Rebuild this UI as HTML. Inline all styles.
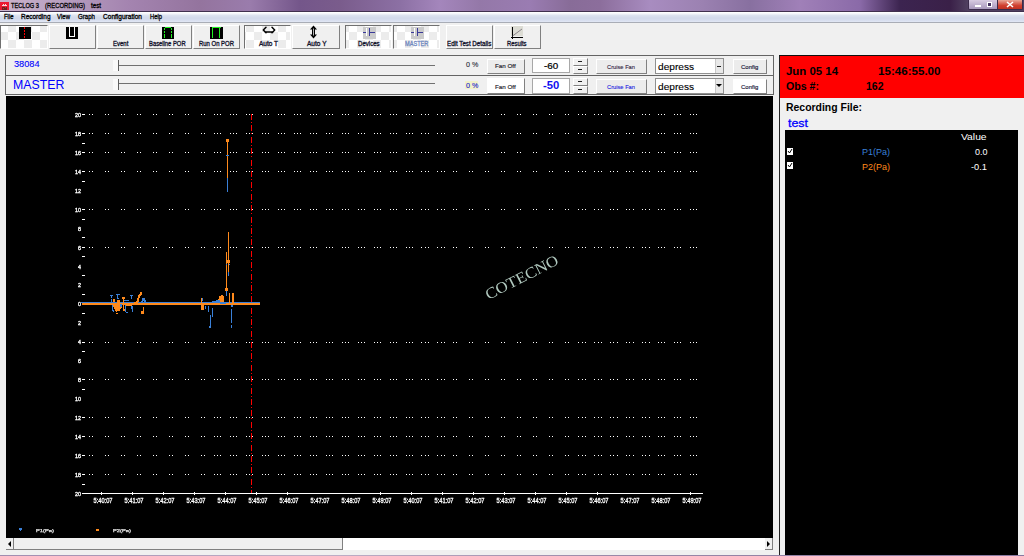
<!DOCTYPE html>
<html><head><meta charset="utf-8"><style>
*{margin:0;padding:0;box-sizing:border-box}
html,body{width:1024px;height:556px;overflow:hidden;background:#f0f0f0;font-family:"Liberation Sans", sans-serif;position:relative}
.a{position:absolute}
.t{position:absolute;white-space:nowrap;line-height:1}
</style></head><body>
<div class="a" style="left:0;top:0;width:1024px;height:12px;background:linear-gradient(90deg,#ccb4cc 0px,#b8a0c0 60px,#a484b0 128px,#94749e 200px,#9a7cac 250px,#74568a 300px,#7a5c8c 340px,#8c70a4 400px,#a486bc 440px,#9478a8 480px,#9a7cb2 530px,#886c98 570px,#8c6e9c 600px,#a88cc0 650px,#9c82b2 700px,#8870a0 750px,#a080b8 800px,#8a6aa8 860px,#3c2450 900px,#3a2048 950px,#504060 968px)"></div>
<div class="a" style="left:0;top:11px;width:1024px;height:1px;background:#40304e"></div>
<div class="a" style="left:0;top:2px;width:9px;height:8px;background:#ec1a32"></div>
<svg class="a" style="left:0;top:2px" width="9" height="8" shape-rendering="crispEdges"><path d="M3 2h1v1h-1zM5 2h1v1h-1zM2 3h5v1h-5z" fill="#f8d8d8"/><path d="M2 5h5v3h-5z" fill="#702020"/><path d="M3 6h1v1h-1zM5 5h1v1h-1z" fill="#b03030"/></svg>
<svg class="a" style="left:10px;top:0.2999999999999998px;overflow:visible" width="30" height="10.5"><text x="1" y="7.5" font-size="7.5" font-family="Liberation Sans" font-weight="normal" fill="#000" stroke="#000" stroke-width="0.3" textLength="28" lengthAdjust="spacingAndGlyphs">TECLOG 3</text></svg>
<svg class="a" style="left:44px;top:0.2999999999999998px;overflow:visible" width="42" height="10.5"><text x="1" y="7.5" font-size="7.5" font-family="Liberation Sans" font-weight="normal" fill="#000" stroke="#000" stroke-width="0.3" textLength="40" lengthAdjust="spacingAndGlyphs">(RECORDING)</text></svg>
<svg class="a" style="left:90px;top:0.2999999999999998px;overflow:visible" width="12" height="10.5"><text x="1" y="7.5" font-size="7.5" font-family="Liberation Sans" font-weight="normal" fill="#000" stroke="#000" stroke-width="0.3" textLength="10" lengthAdjust="spacingAndGlyphs">test</text></svg>
<div class="a" style="left:968px;top:0;width:30px;height:10px;background:linear-gradient(#d8cce2,#a898bc);border:1px solid #3a2a4a;border-top:none;border-radius:0 0 0 2px"></div>
<div class="a" style="left:975px;top:5px;width:6px;height:2px;background:#fff"></div>
<div class="a" style="left:987px;top:2px;width:5px;height:5px;border:1px solid #fff;background:#443060"></div>
<div class="a" style="left:997px;top:0;width:26px;height:10px;background:linear-gradient(#e8a898,#d04030 60%,#c03020);border:1px solid #3a2a4a;border-top:none;border-radius:0 0 2px 0"></div>
<svg class="a" style="left:1006px;top:1px" width="8" height="7"><path d="M1 1L7 6M7 1L1 6" stroke="#fff" stroke-width="1.6"/></svg>
<div class="a" style="left:0;top:12px;width:1024px;height:10px;background:linear-gradient(#fff 0px,#fbfcfe 1px,#dce2ef 3.5px,#d2d9ea 6px,#d6ddee 8px,#e2e8f5 10px)"></div>
<div class="a" style="left:0;top:22px;width:1024px;height:1px;background:#a9adb6"></div>
<svg class="a" style="left:2.5px;top:11.9px;overflow:visible" width="11.5" height="9.9"><text x="1" y="7.1" font-size="7.1" font-family="Liberation Sans" font-weight="normal" fill="#000" stroke="#000" stroke-width="0.3" textLength="9.5" lengthAdjust="spacingAndGlyphs">File</text></svg>
<svg class="a" style="left:19.5px;top:11.9px;overflow:visible" width="31.5" height="9.9"><text x="1" y="7.1" font-size="7.1" font-family="Liberation Sans" font-weight="normal" fill="#000" stroke="#000" stroke-width="0.3" textLength="29.5" lengthAdjust="spacingAndGlyphs">Recording</text></svg>
<svg class="a" style="left:56px;top:11.9px;overflow:visible" width="15" height="9.9"><text x="1" y="7.1" font-size="7.1" font-family="Liberation Sans" font-weight="normal" fill="#000" stroke="#000" stroke-width="0.3" textLength="13" lengthAdjust="spacingAndGlyphs">View</text></svg>
<svg class="a" style="left:77px;top:11.9px;overflow:visible" width="19" height="9.9"><text x="1" y="7.1" font-size="7.1" font-family="Liberation Sans" font-weight="normal" fill="#000" stroke="#000" stroke-width="0.3" textLength="17" lengthAdjust="spacingAndGlyphs">Graph</text></svg>
<svg class="a" style="left:102px;top:11.9px;overflow:visible" width="41" height="9.9"><text x="1" y="7.1" font-size="7.1" font-family="Liberation Sans" font-weight="normal" fill="#000" stroke="#000" stroke-width="0.3" textLength="39" lengthAdjust="spacingAndGlyphs">Configuration</text></svg>
<svg class="a" style="left:149px;top:11.9px;overflow:visible" width="14" height="9.9"><text x="1" y="7.1" font-size="7.1" font-family="Liberation Sans" font-weight="normal" fill="#000" stroke="#000" stroke-width="0.3" textLength="12" lengthAdjust="spacingAndGlyphs">Help</text></svg>
<div class="a" style="left:0px;top:25px;width:48px;height:24px;background-color:#fff;background-image:linear-gradient(45deg,#ececec 25%,transparent 25%,transparent 75%,#ececec 75%),linear-gradient(45deg,#ececec 25%,transparent 25%,transparent 75%,#ececec 75%);background-size:16px 16px;background-position:0px -1px,8px 7px"></div><div class="a" style="left:0px;top:25px;width:48px;height:24px;border-left:1px solid #707070;border-top:1px solid #707070;border-right:1px solid #fff;border-bottom:1px solid #fff"></div>
<div class="a" style="left:49px;top:25px;width:47px;height:24px;background:#f0f0f0;border-left:1px solid #fff;border-top:1px solid #fff;border-right:1px solid #808080;border-bottom:1px solid #808080"></div>
<div class="a" style="left:97px;top:25px;width:47px;height:24px;background:#f0f0f0;border-left:1px solid #fff;border-top:1px solid #fff;border-right:1px solid #808080;border-bottom:1px solid #808080"></div>
<div class="a" style="left:145px;top:25px;width:47px;height:24px;background:#f0f0f0;border-left:1px solid #fff;border-top:1px solid #fff;border-right:1px solid #808080;border-bottom:1px solid #808080"></div>
<div class="a" style="left:193px;top:25px;width:47px;height:24px;background:#f0f0f0;border-left:1px solid #fff;border-top:1px solid #fff;border-right:1px solid #808080;border-bottom:1px solid #808080"></div>
<div class="a" style="left:244px;top:25px;width:47px;height:24px;background-color:#fff;background-image:linear-gradient(45deg,#ececec 25%,transparent 25%,transparent 75%,#ececec 75%),linear-gradient(45deg,#ececec 25%,transparent 25%,transparent 75%,#ececec 75%);background-size:16px 16px;background-position:10px -1px,18px 7px"></div><div class="a" style="left:244px;top:25px;width:47px;height:24px;border-left:1px solid #707070;border-top:1px solid #707070;border-right:1px solid #fff;border-bottom:1px solid #fff"></div>
<div class="a" style="left:292px;top:25px;width:48px;height:24px;background:#f0f0f0;border-left:1px solid #fff;border-top:1px solid #fff;border-right:1px solid #808080;border-bottom:1px solid #808080"></div>
<div class="a" style="left:345px;top:25px;width:47px;height:24px;background-color:#fff;background-image:linear-gradient(45deg,#ececec 25%,transparent 25%,transparent 75%,#ececec 75%),linear-gradient(45deg,#ececec 25%,transparent 25%,transparent 75%,#ececec 75%);background-size:16px 16px;background-position:4px -1px,12px 7px"></div><div class="a" style="left:345px;top:25px;width:47px;height:24px;border-left:1px solid #707070;border-top:1px solid #707070;border-right:1px solid #fff;border-bottom:1px solid #fff"></div>
<div class="a" style="left:393px;top:25px;width:47px;height:24px;background-color:#fff;background-image:linear-gradient(45deg,#ececec 25%,transparent 25%,transparent 75%,#ececec 75%),linear-gradient(45deg,#ececec 25%,transparent 25%,transparent 75%,#ececec 75%);background-size:16px 16px;background-position:4px -1px,12px 7px"></div><div class="a" style="left:393px;top:25px;width:47px;height:24px;border-left:1px solid #707070;border-top:1px solid #707070;border-right:1px solid #fff;border-bottom:1px solid #fff"></div>
<div class="a" style="left:446px;top:25px;width:47px;height:24px;background:#f0f0f0;border-left:1px solid #fff;border-top:1px solid #fff;border-right:1px solid #808080;border-bottom:1px solid #808080"></div>
<div class="a" style="left:494px;top:25px;width:47px;height:24px;background:#f0f0f0;border-left:1px solid #fff;border-top:1px solid #fff;border-right:1px solid #808080;border-bottom:1px solid #808080"></div>
<svg class="a" style="left:111.7px;top:39.4px;overflow:visible" width="17.3" height="9.2"><text x="1" y="6.6" font-size="6.6" font-family="Liberation Sans" font-weight="normal" fill="#10102a" stroke="#10102a" stroke-width="0.3" textLength="15.3" lengthAdjust="spacingAndGlyphs">Event</text></svg>
<svg class="a" style="left:148.4px;top:39.4px;overflow:visible" width="38.6" height="9.2"><text x="1" y="6.6" font-size="6.6" font-family="Liberation Sans" font-weight="normal" fill="#10102a" stroke="#10102a" stroke-width="0.3" textLength="36.6" lengthAdjust="spacingAndGlyphs">Baseline POR</text></svg>
<svg class="a" style="left:197.6px;top:39.4px;overflow:visible" width="37" height="9.2"><text x="1" y="6.6" font-size="6.6" font-family="Liberation Sans" font-weight="normal" fill="#10102a" stroke="#10102a" stroke-width="0.3" textLength="35" lengthAdjust="spacingAndGlyphs">Run On POR</text></svg>
<svg class="a" style="left:258.2px;top:39.4px;overflow:visible" width="21" height="9.2"><text x="1" y="6.6" font-size="6.6" font-family="Liberation Sans" font-weight="normal" fill="#10102a" stroke="#10102a" stroke-width="0.3" textLength="19" lengthAdjust="spacingAndGlyphs">Auto T</text></svg>
<svg class="a" style="left:305.9px;top:39.4px;overflow:visible" width="21.5" height="9.2"><text x="1" y="6.6" font-size="6.6" font-family="Liberation Sans" font-weight="normal" fill="#10102a" stroke="#10102a" stroke-width="0.3" textLength="19.5" lengthAdjust="spacingAndGlyphs">Auto Y</text></svg>
<svg class="a" style="left:357.4px;top:39.4px;overflow:visible" width="23.6" height="9.2"><text x="1" y="6.6" font-size="6.6" font-family="Liberation Sans" font-weight="normal" fill="#10102a" stroke="#10102a" stroke-width="0.3" textLength="21.6" lengthAdjust="spacingAndGlyphs">Devices</text></svg>
<svg class="a" style="left:404.3px;top:39.4px;overflow:visible" width="25.4" height="9.2"><text x="1" y="6.6" font-size="6.6" font-family="Liberation Sans" font-weight="normal" fill="#7088c0" stroke="#7088c0" stroke-width="0.3" textLength="23.4" lengthAdjust="spacingAndGlyphs">MASTER</text></svg>
<svg class="a" style="left:445.7px;top:39.4px;overflow:visible" width="46.3" height="9.2"><text x="1" y="6.6" font-size="6.6" font-family="Liberation Sans" font-weight="normal" fill="#10102a" stroke="#10102a" stroke-width="0.3" textLength="44.3" lengthAdjust="spacingAndGlyphs">Edit Test Details</text></svg>
<svg class="a" style="left:505.9px;top:39.4px;overflow:visible" width="21.5" height="9.2"><text x="1" y="6.6" font-size="6.6" font-family="Liberation Sans" font-weight="normal" fill="#10102a" stroke="#10102a" stroke-width="0.3" textLength="19.5" lengthAdjust="spacingAndGlyphs">Results</text></svg>
<div class="a" style="left:19px;top:27px;width:12px;height:12px;background:#000"></div>
<div class="a" style="left:24px;top:27px;width:1px;height:12px;background:repeating-linear-gradient(#f00 0 2px,#000 2px 3px)"></div>
<div class="a" style="left:66px;top:27px;width:12px;height:12px;background:#000"></div>
<div class="a" style="left:69px;top:27px;width:6px;height:10px;border:1px solid #fff;border-top:none"></div>
<div class="a" style="left:162px;top:27px;width:12px;height:12px;background:#000"></div>
<div class="a" style="left:210px;top:27px;width:13px;height:12px;background:#000"></div>
<svg class="a" style="left:162px;top:27px" width="12" height="12" shape-rendering="crispEdges"><path d="M2 1h1v2h-1zM3 0h6v1h-6zM9 1h1v2h-1zM2 4h1v2h-1zM9 4h1v2h-1zM2 7h1v4h-1zM9 7h1v4h-1z" fill="#20f020"/></svg>
<svg class="a" style="left:210px;top:27px" width="13" height="12" shape-rendering="crispEdges"><path d="M2 0h9v1h-9zM2 1h1v10h-1zM9 1h1v10h-1z" fill="#20f020"/></svg>
<svg class="a" style="left:262px;top:26px" width="15" height="9"><path d="M4 1.2 L1.3 4 L4 6.8 M10 1.2 L12.7 4 L10 6.8 M3 6 H11" stroke="#000" stroke-width="1.5" fill="none" stroke-linejoin="round" stroke-linecap="round"/></svg>
<svg class="a" style="left:309px;top:25px" width="10" height="15"><path d="M4.5 0.5 L8 4.5 H1 Z M4.5 13.5 L8 9.5 H1 Z" fill="#000"/><path d="M3 4 H6 V10 H3 Z" fill="#000"/><path d="M4.5 3.5 V10.5" stroke="#fff" stroke-width="0.7"/></svg>
<div class="a" style="left:363px;top:27px;width:13px;height:12px;background:#cbcbcb"></div>
<svg class="a" style="left:363px;top:27px" width="13" height="12" shape-rendering="crispEdges"><path d="M3 1h1v8h-1z" fill="#fff"/><path d="M0 5h3v1h-3zM6 1h1v8h-1zM7 5h5v1h-5z" fill="#3a3a98"/></svg>
<div class="a" style="left:411px;top:27px;width:13px;height:12px;background:#cbcbcb"></div>
<svg class="a" style="left:411px;top:27px" width="13" height="12" shape-rendering="crispEdges"><path d="M3 1h1v8h-1z" fill="#fff"/><path d="M0 5h3v1h-3zM6 1h1v8h-1zM7 5h5v1h-5z" fill="#3a3a98"/></svg>
<div class="a" style="left:511px;top:26px;width:12px;height:10px;background:#dcdcd4"></div>
<svg class="a" style="left:510px;top:26px" width="14" height="14" shape-rendering="crispEdges"><path d="M2 1h1v12h-1zM1 11h12v1h-12z" fill="#000"/><path d="M2.5 10L12 3" stroke="#807880" stroke-width="0.9" shape-rendering="auto"/></svg>
<div class="a" style="left:5px;top:55px;width:769px;height:40px;border:1px solid #646464;background:#f0f0f0"></div>
<div class="a" style="left:5px;top:75px;width:769px;height:1px;background:#646464"></div>
<svg class="a" style="left:12.8px;top:57.6px;overflow:visible" width="27.6" height="13.2"><text x="1" y="9.4" font-size="9.4" font-family="Liberation Sans" font-weight="normal" fill="#0000ff" stroke="#0000ff" stroke-width="0.1" textLength="25.6" lengthAdjust="spacingAndGlyphs">38084</text></svg>
<svg class="a" style="left:12.4px;top:76.5px;overflow:visible" width="53.3" height="17.4"><text x="1" y="12.4" font-size="12.4" font-family="Liberation Sans" font-weight="normal" fill="#0000ff" textLength="51.3" lengthAdjust="spacingAndGlyphs">MASTER</text></svg>
<div class="a" style="left:119px;top:65px;width:316px;height:1px;background:#707070"></div>
<div class="a" style="left:113px;top:60px;width:6px;height:11px;background:#fafafa;border-right:1px solid #606060"></div>
<div class="a" style="left:119px;top:83px;width:316px;height:1px;background:#707070"></div>
<div class="a" style="left:113px;top:79px;width:6px;height:11px;background:#fafafa;border-right:1px solid #606060"></div>
<svg class="a" style="left:464.5px;top:60.2px;overflow:visible" width="14.3" height="9.5"><text x="1" y="6.8" font-size="6.8" font-family="Liberation Sans" font-weight="normal" fill="#282838" stroke="#282838" stroke-width="0.1" textLength="12.3" lengthAdjust="spacingAndGlyphs">0 %</text></svg>
<div class="a" style="left:465px;top:81px;width:13px;height:8px;background:#f2f2c8"></div>
<svg class="a" style="left:464.5px;top:80.7px;overflow:visible" width="14.3" height="9.5"><text x="1" y="6.8" font-size="6.8" font-family="Liberation Sans" font-weight="normal" fill="#2020d0" stroke="#2020d0" stroke-width="0.1" textLength="12.3" lengthAdjust="spacingAndGlyphs">0 %</text></svg>
<div class="a" style="left:487px;top:59px;width:38px;height:15px;background:#ececec;border-left:1px solid #fff;border-top:1px solid #fff;border-right:1px solid #808080;border-bottom:1px solid #808080"></div>
<div class="a" style="left:487px;top:78px;width:38px;height:16px;background:#fff;border-left:1px solid #fff;border-top:1px solid #fff;border-right:1px solid #808080;border-bottom:1px solid #808080"></div>
<svg class="a" style="left:493.5px;top:62px;overflow:visible" width="22.7" height="8.4"><text x="1" y="6" font-size="6" font-family="Liberation Sans" font-weight="normal" fill="#181828" stroke="#181828" stroke-width="0.15" textLength="20.7" lengthAdjust="spacingAndGlyphs">Fan Off</text></svg>
<svg class="a" style="left:493.5px;top:83px;overflow:visible" width="22.7" height="8.4"><text x="1" y="6" font-size="6" font-family="Liberation Sans" font-weight="normal" fill="#181828" stroke="#181828" stroke-width="0.15" textLength="20.7" lengthAdjust="spacingAndGlyphs">Fan Off</text></svg>
<div class="a" style="left:532px;top:58px;width:38px;height:15px;background:#fff;border:1px solid #a8a8a8"></div>
<svg class="a" style="left:543px;top:59.699999999999996px;overflow:visible" width="16.2" height="12.0"><text x="1" y="8.6" font-size="8.6" font-family="Liberation Sans" font-weight="normal" fill="#000" stroke="#000" stroke-width="0.2" textLength="14.2" lengthAdjust="spacingAndGlyphs">-60</text></svg>
<div class="a" style="left:532px;top:78px;width:38px;height:16px;background:#fff;border:1px solid #a8a8a8"></div>
<svg class="a" style="left:541.7px;top:79.3px;overflow:visible" width="18.3" height="14.6"><text x="1" y="10.4" font-size="10.4" font-family="Liberation Sans" font-weight="bold" fill="#1010f0" textLength="16.3" lengthAdjust="spacingAndGlyphs">-50</text></svg>
<div class="a" style="left:573px;top:58px;width:15px;height:8px;background:#f0f0f0;border-left:1px solid #fff;border-top:1px solid #fff;border-right:1px solid #808080;border-bottom:1px solid #808080"></div>
<div class="a" style="left:573px;top:66px;width:15px;height:8px;background:#f0f0f0;border-left:1px solid #fff;border-top:1px solid #fff;border-right:1px solid #808080;border-bottom:1px solid #808080"></div>
<div class="a" style="left:578px;top:61px;width:4px;height:1px;background:#202020"></div>
<div class="a" style="left:578px;top:69px;width:4px;height:1px;background:#202020"></div>
<div class="a" style="left:573px;top:78px;width:15px;height:8px;background:#f0f0f0;border-left:1px solid #fff;border-top:1px solid #fff;border-right:1px solid #808080;border-bottom:1px solid #808080"></div>
<div class="a" style="left:573px;top:86px;width:15px;height:8px;background:#f0f0f0;border-left:1px solid #fff;border-top:1px solid #fff;border-right:1px solid #808080;border-bottom:1px solid #808080"></div>
<div class="a" style="left:578px;top:81px;width:4px;height:1px;background:#202020"></div>
<div class="a" style="left:578px;top:89px;width:4px;height:1px;background:#202020"></div>
<div class="a" style="left:596px;top:59px;width:51px;height:15px;background:#ececec;border-left:1px solid #fff;border-top:1px solid #fff;border-right:1px solid #808080;border-bottom:1px solid #808080"></div>
<div class="a" style="left:596px;top:79px;width:51px;height:15px;background:#ececec;border-left:1px solid #fff;border-top:1px solid #fff;border-right:1px solid #808080;border-bottom:1px solid #808080"></div>
<svg class="a" style="left:606px;top:63.2px;overflow:visible" width="30" height="8.1"><text x="1" y="5.8" font-size="5.8" font-family="Liberation Sans" font-weight="normal" fill="#302040" stroke="#302040" stroke-width="0.1" textLength="28" lengthAdjust="spacingAndGlyphs">Cruise Fan</text></svg>
<svg class="a" style="left:606px;top:83.2px;overflow:visible" width="30" height="8.1"><text x="1" y="5.8" font-size="5.8" font-family="Liberation Sans" font-weight="normal" fill="#2020e0" stroke="#2020e0" stroke-width="0.1" textLength="28" lengthAdjust="spacingAndGlyphs">Cruise Fan</text></svg>
<div class="a" style="left:655px;top:58px;width:69px;height:16px;background:#fff;border:1px solid #909090"></div>
<div class="a" style="left:715px;top:59px;width:8px;height:14px;background:#e8e8e8;border-left:1px solid #c8c8c8"></div>
<svg class="a" style="left:656.5px;top:60.2px;overflow:visible" width="38" height="13.7"><text x="1" y="9.8" font-size="9.8" font-family="Liberation Sans" font-weight="normal" fill="#000" stroke="#000" stroke-width="0.12" textLength="36" lengthAdjust="spacingAndGlyphs">depress</text></svg>
<div class="a" style="left:655px;top:78px;width:69px;height:16px;background:#fff;border:1px solid #909090"></div>
<div class="a" style="left:715px;top:79px;width:8px;height:14px;background:#e8e8e8;border-left:1px solid #c8c8c8"></div>
<svg class="a" style="left:656.5px;top:80.2px;overflow:visible" width="38" height="13.7"><text x="1" y="9.8" font-size="9.8" font-family="Liberation Sans" font-weight="normal" fill="#000" stroke="#000" stroke-width="0.12" textLength="36" lengthAdjust="spacingAndGlyphs">depress</text></svg>
<div class="a" style="left:717px;top:66px;width:4px;height:1px;background:#202020"></div>
<svg class="a" style="left:716px;top:84px" width="6" height="4"><path d="M0 0 H6 L3 3 Z" fill="#000"/></svg>
<div class="a" style="left:733px;top:59px;width:34px;height:15px;background:#ececec;border-left:1px solid #fff;border-top:1px solid #fff;border-right:1px solid #808080;border-bottom:1px solid #808080"></div>
<div class="a" style="left:733px;top:79px;width:34px;height:15px;background:#fff;border-left:1px solid #fff;border-top:1px solid #fff;border-right:1px solid #808080;border-bottom:1px solid #808080"></div>
<svg class="a" style="left:740.2px;top:62.8px;overflow:visible" width="19.3" height="8.7"><text x="1" y="6.2" font-size="6.2" font-family="Liberation Sans" font-weight="normal" fill="#181838" stroke="#181838" stroke-width="0.15" textLength="17.3" lengthAdjust="spacingAndGlyphs">Config</text></svg>
<svg class="a" style="left:740.2px;top:82.8px;overflow:visible" width="19.3" height="8.7"><text x="1" y="6.2" font-size="6.2" font-family="Liberation Sans" font-weight="normal" fill="#181838" stroke="#181838" stroke-width="0.15" textLength="17.3" lengthAdjust="spacingAndGlyphs">Config</text></svg>
<svg width="767" height="442" viewBox="6 96 767 442" style="position:absolute;left:6px;top:96px;will-change:transform" shape-rendering="crispEdges">
<rect x="6" y="96" width="767" height="442" fill="#000"/>
<path d="M89 114h1v1h-1zM92 114h1v1h-1zM105 114h1v1h-1zM108 114h1v1h-1zM121 114h1v1h-1zM124 114h1v1h-1zM137 114h1v1h-1zM140 114h1v1h-1zM153 114h1v1h-1zM156 114h1v1h-1zM169 114h1v1h-1zM172 114h1v1h-1zM185 114h1v1h-1zM188 114h1v1h-1zM201 114h1v1h-1zM204 114h1v1h-1zM214 114h1v1h-1zM217 114h1v1h-1zM220 114h1v1h-1zM230 114h1v1h-1zM233 114h1v1h-1zM236 114h1v1h-1zM246 114h1v1h-1zM249 114h1v1h-1zM252 114h1v1h-1zM262 114h1v1h-1zM265 114h1v1h-1zM268 114h1v1h-1zM278 114h1v1h-1zM281 114h1v1h-1zM284 114h1v1h-1zM294 114h1v1h-1zM297 114h1v1h-1zM300 114h1v1h-1zM310 114h1v1h-1zM313 114h1v1h-1zM316 114h1v1h-1zM326 114h1v1h-1zM329 114h1v1h-1zM332 114h1v1h-1zM342 114h1v1h-1zM345 114h1v1h-1zM348 114h1v1h-1zM358 114h1v1h-1zM361 114h1v1h-1zM364 114h1v1h-1zM374 114h1v1h-1zM377 114h1v1h-1zM380 114h1v1h-1zM390 114h1v1h-1zM393 114h1v1h-1zM396 114h1v1h-1zM406 114h1v1h-1zM409 114h1v1h-1zM412 114h1v1h-1zM421 114h1v1h-1zM425 114h1v1h-1zM428 114h1v1h-1zM437 114h1v1h-1zM441 114h1v1h-1zM444 114h1v1h-1zM453 114h1v1h-1zM456 114h1v1h-1zM469 114h1v1h-1zM472 114h1v1h-1zM485 114h1v1h-1zM488 114h1v1h-1zM501 114h1v1h-1zM504 114h1v1h-1zM517 114h1v1h-1zM520 114h1v1h-1zM533 114h1v1h-1zM536 114h1v1h-1zM549 114h1v1h-1zM552 114h1v1h-1zM565 114h1v1h-1zM568 114h1v1h-1zM578 114h1v1h-1zM582 114h1v1h-1zM585 114h1v1h-1zM594 114h1v1h-1zM598 114h1v1h-1zM601 114h1v1h-1zM610 114h1v1h-1zM613 114h1v1h-1zM617 114h1v1h-1zM626 114h1v1h-1zM629 114h1v1h-1zM633 114h1v1h-1zM642 114h1v1h-1zM645 114h1v1h-1zM649 114h1v1h-1zM658 114h1v1h-1zM661 114h1v1h-1zM664 114h1v1h-1zM674 114h1v1h-1zM677 114h1v1h-1zM680 114h1v1h-1zM690 114h1v1h-1zM693 114h1v1h-1zM696 114h1v1h-1zM89 133h1v1h-1zM92 133h1v1h-1zM105 133h1v1h-1zM108 133h1v1h-1zM121 133h1v1h-1zM124 133h1v1h-1zM137 133h1v1h-1zM140 133h1v1h-1zM153 133h1v1h-1zM156 133h1v1h-1zM169 133h1v1h-1zM172 133h1v1h-1zM185 133h1v1h-1zM188 133h1v1h-1zM201 133h1v1h-1zM204 133h1v1h-1zM214 133h1v1h-1zM217 133h1v1h-1zM220 133h1v1h-1zM230 133h1v1h-1zM233 133h1v1h-1zM236 133h1v1h-1zM246 133h1v1h-1zM249 133h1v1h-1zM252 133h1v1h-1zM262 133h1v1h-1zM265 133h1v1h-1zM268 133h1v1h-1zM278 133h1v1h-1zM281 133h1v1h-1zM284 133h1v1h-1zM294 133h1v1h-1zM297 133h1v1h-1zM300 133h1v1h-1zM310 133h1v1h-1zM313 133h1v1h-1zM316 133h1v1h-1zM326 133h1v1h-1zM329 133h1v1h-1zM332 133h1v1h-1zM342 133h1v1h-1zM345 133h1v1h-1zM348 133h1v1h-1zM358 133h1v1h-1zM361 133h1v1h-1zM364 133h1v1h-1zM374 133h1v1h-1zM377 133h1v1h-1zM380 133h1v1h-1zM390 133h1v1h-1zM393 133h1v1h-1zM396 133h1v1h-1zM406 133h1v1h-1zM409 133h1v1h-1zM412 133h1v1h-1zM421 133h1v1h-1zM425 133h1v1h-1zM428 133h1v1h-1zM437 133h1v1h-1zM441 133h1v1h-1zM444 133h1v1h-1zM453 133h1v1h-1zM456 133h1v1h-1zM469 133h1v1h-1zM472 133h1v1h-1zM485 133h1v1h-1zM488 133h1v1h-1zM501 133h1v1h-1zM504 133h1v1h-1zM517 133h1v1h-1zM520 133h1v1h-1zM533 133h1v1h-1zM536 133h1v1h-1zM549 133h1v1h-1zM552 133h1v1h-1zM565 133h1v1h-1zM568 133h1v1h-1zM578 133h1v1h-1zM582 133h1v1h-1zM585 133h1v1h-1zM594 133h1v1h-1zM598 133h1v1h-1zM601 133h1v1h-1zM610 133h1v1h-1zM613 133h1v1h-1zM617 133h1v1h-1zM626 133h1v1h-1zM629 133h1v1h-1zM633 133h1v1h-1zM642 133h1v1h-1zM645 133h1v1h-1zM649 133h1v1h-1zM658 133h1v1h-1zM661 133h1v1h-1zM664 133h1v1h-1zM674 133h1v1h-1zM677 133h1v1h-1zM680 133h1v1h-1zM690 133h1v1h-1zM693 133h1v1h-1zM696 133h1v1h-1zM89 152h1v1h-1zM92 152h1v1h-1zM105 152h1v1h-1zM108 152h1v1h-1zM121 152h1v1h-1zM124 152h1v1h-1zM137 152h1v1h-1zM140 152h1v1h-1zM153 152h1v1h-1zM156 152h1v1h-1zM169 152h1v1h-1zM172 152h1v1h-1zM185 152h1v1h-1zM188 152h1v1h-1zM201 152h1v1h-1zM204 152h1v1h-1zM214 152h1v1h-1zM217 152h1v1h-1zM220 152h1v1h-1zM230 152h1v1h-1zM233 152h1v1h-1zM236 152h1v1h-1zM246 152h1v1h-1zM249 152h1v1h-1zM252 152h1v1h-1zM262 152h1v1h-1zM265 152h1v1h-1zM268 152h1v1h-1zM278 152h1v1h-1zM281 152h1v1h-1zM284 152h1v1h-1zM294 152h1v1h-1zM297 152h1v1h-1zM300 152h1v1h-1zM310 152h1v1h-1zM313 152h1v1h-1zM316 152h1v1h-1zM326 152h1v1h-1zM329 152h1v1h-1zM332 152h1v1h-1zM342 152h1v1h-1zM345 152h1v1h-1zM348 152h1v1h-1zM358 152h1v1h-1zM361 152h1v1h-1zM364 152h1v1h-1zM374 152h1v1h-1zM377 152h1v1h-1zM380 152h1v1h-1zM390 152h1v1h-1zM393 152h1v1h-1zM396 152h1v1h-1zM406 152h1v1h-1zM409 152h1v1h-1zM412 152h1v1h-1zM421 152h1v1h-1zM425 152h1v1h-1zM428 152h1v1h-1zM437 152h1v1h-1zM441 152h1v1h-1zM444 152h1v1h-1zM453 152h1v1h-1zM456 152h1v1h-1zM469 152h1v1h-1zM472 152h1v1h-1zM485 152h1v1h-1zM488 152h1v1h-1zM501 152h1v1h-1zM504 152h1v1h-1zM517 152h1v1h-1zM520 152h1v1h-1zM533 152h1v1h-1zM536 152h1v1h-1zM549 152h1v1h-1zM552 152h1v1h-1zM565 152h1v1h-1zM568 152h1v1h-1zM578 152h1v1h-1zM582 152h1v1h-1zM585 152h1v1h-1zM594 152h1v1h-1zM598 152h1v1h-1zM601 152h1v1h-1zM610 152h1v1h-1zM613 152h1v1h-1zM617 152h1v1h-1zM626 152h1v1h-1zM629 152h1v1h-1zM633 152h1v1h-1zM642 152h1v1h-1zM645 152h1v1h-1zM649 152h1v1h-1zM658 152h1v1h-1zM661 152h1v1h-1zM664 152h1v1h-1zM674 152h1v1h-1zM677 152h1v1h-1zM680 152h1v1h-1zM690 152h1v1h-1zM693 152h1v1h-1zM696 152h1v1h-1zM89 171h1v1h-1zM92 171h1v1h-1zM105 171h1v1h-1zM108 171h1v1h-1zM121 171h1v1h-1zM124 171h1v1h-1zM137 171h1v1h-1zM140 171h1v1h-1zM153 171h1v1h-1zM156 171h1v1h-1zM169 171h1v1h-1zM172 171h1v1h-1zM185 171h1v1h-1zM188 171h1v1h-1zM201 171h1v1h-1zM204 171h1v1h-1zM214 171h1v1h-1zM217 171h1v1h-1zM220 171h1v1h-1zM230 171h1v1h-1zM233 171h1v1h-1zM236 171h1v1h-1zM246 171h1v1h-1zM249 171h1v1h-1zM252 171h1v1h-1zM262 171h1v1h-1zM265 171h1v1h-1zM268 171h1v1h-1zM278 171h1v1h-1zM281 171h1v1h-1zM284 171h1v1h-1zM294 171h1v1h-1zM297 171h1v1h-1zM300 171h1v1h-1zM310 171h1v1h-1zM313 171h1v1h-1zM316 171h1v1h-1zM326 171h1v1h-1zM329 171h1v1h-1zM332 171h1v1h-1zM342 171h1v1h-1zM345 171h1v1h-1zM348 171h1v1h-1zM358 171h1v1h-1zM361 171h1v1h-1zM364 171h1v1h-1zM374 171h1v1h-1zM377 171h1v1h-1zM380 171h1v1h-1zM390 171h1v1h-1zM393 171h1v1h-1zM396 171h1v1h-1zM406 171h1v1h-1zM409 171h1v1h-1zM412 171h1v1h-1zM421 171h1v1h-1zM425 171h1v1h-1zM428 171h1v1h-1zM437 171h1v1h-1zM441 171h1v1h-1zM444 171h1v1h-1zM453 171h1v1h-1zM456 171h1v1h-1zM469 171h1v1h-1zM472 171h1v1h-1zM485 171h1v1h-1zM488 171h1v1h-1zM501 171h1v1h-1zM504 171h1v1h-1zM517 171h1v1h-1zM520 171h1v1h-1zM533 171h1v1h-1zM536 171h1v1h-1zM549 171h1v1h-1zM552 171h1v1h-1zM565 171h1v1h-1zM568 171h1v1h-1zM578 171h1v1h-1zM582 171h1v1h-1zM585 171h1v1h-1zM594 171h1v1h-1zM598 171h1v1h-1zM601 171h1v1h-1zM610 171h1v1h-1zM613 171h1v1h-1zM617 171h1v1h-1zM626 171h1v1h-1zM629 171h1v1h-1zM633 171h1v1h-1zM642 171h1v1h-1zM645 171h1v1h-1zM649 171h1v1h-1zM658 171h1v1h-1zM661 171h1v1h-1zM664 171h1v1h-1zM674 171h1v1h-1zM677 171h1v1h-1zM680 171h1v1h-1zM690 171h1v1h-1zM693 171h1v1h-1zM696 171h1v1h-1zM89 209h1v1h-1zM92 209h1v1h-1zM105 209h1v1h-1zM108 209h1v1h-1zM121 209h1v1h-1zM124 209h1v1h-1zM137 209h1v1h-1zM140 209h1v1h-1zM153 209h1v1h-1zM156 209h1v1h-1zM169 209h1v1h-1zM172 209h1v1h-1zM185 209h1v1h-1zM188 209h1v1h-1zM201 209h1v1h-1zM204 209h1v1h-1zM214 209h1v1h-1zM217 209h1v1h-1zM220 209h1v1h-1zM230 209h1v1h-1zM233 209h1v1h-1zM236 209h1v1h-1zM246 209h1v1h-1zM249 209h1v1h-1zM252 209h1v1h-1zM262 209h1v1h-1zM265 209h1v1h-1zM268 209h1v1h-1zM278 209h1v1h-1zM281 209h1v1h-1zM284 209h1v1h-1zM294 209h1v1h-1zM297 209h1v1h-1zM300 209h1v1h-1zM310 209h1v1h-1zM313 209h1v1h-1zM316 209h1v1h-1zM326 209h1v1h-1zM329 209h1v1h-1zM332 209h1v1h-1zM342 209h1v1h-1zM345 209h1v1h-1zM348 209h1v1h-1zM358 209h1v1h-1zM361 209h1v1h-1zM364 209h1v1h-1zM374 209h1v1h-1zM377 209h1v1h-1zM380 209h1v1h-1zM390 209h1v1h-1zM393 209h1v1h-1zM396 209h1v1h-1zM406 209h1v1h-1zM409 209h1v1h-1zM412 209h1v1h-1zM421 209h1v1h-1zM425 209h1v1h-1zM428 209h1v1h-1zM437 209h1v1h-1zM441 209h1v1h-1zM444 209h1v1h-1zM453 209h1v1h-1zM456 209h1v1h-1zM469 209h1v1h-1zM472 209h1v1h-1zM485 209h1v1h-1zM488 209h1v1h-1zM501 209h1v1h-1zM504 209h1v1h-1zM517 209h1v1h-1zM520 209h1v1h-1zM533 209h1v1h-1zM536 209h1v1h-1zM549 209h1v1h-1zM552 209h1v1h-1zM565 209h1v1h-1zM568 209h1v1h-1zM578 209h1v1h-1zM582 209h1v1h-1zM585 209h1v1h-1zM594 209h1v1h-1zM598 209h1v1h-1zM601 209h1v1h-1zM610 209h1v1h-1zM613 209h1v1h-1zM617 209h1v1h-1zM626 209h1v1h-1zM629 209h1v1h-1zM633 209h1v1h-1zM642 209h1v1h-1zM645 209h1v1h-1zM649 209h1v1h-1zM658 209h1v1h-1zM661 209h1v1h-1zM664 209h1v1h-1zM674 209h1v1h-1zM677 209h1v1h-1zM680 209h1v1h-1zM690 209h1v1h-1zM693 209h1v1h-1zM696 209h1v1h-1zM89 247h1v1h-1zM92 247h1v1h-1zM105 247h1v1h-1zM108 247h1v1h-1zM121 247h1v1h-1zM124 247h1v1h-1zM137 247h1v1h-1zM140 247h1v1h-1zM153 247h1v1h-1zM156 247h1v1h-1zM169 247h1v1h-1zM172 247h1v1h-1zM185 247h1v1h-1zM188 247h1v1h-1zM201 247h1v1h-1zM204 247h1v1h-1zM214 247h1v1h-1zM217 247h1v1h-1zM220 247h1v1h-1zM230 247h1v1h-1zM233 247h1v1h-1zM236 247h1v1h-1zM246 247h1v1h-1zM249 247h1v1h-1zM252 247h1v1h-1zM262 247h1v1h-1zM265 247h1v1h-1zM268 247h1v1h-1zM278 247h1v1h-1zM281 247h1v1h-1zM284 247h1v1h-1zM294 247h1v1h-1zM297 247h1v1h-1zM300 247h1v1h-1zM310 247h1v1h-1zM313 247h1v1h-1zM316 247h1v1h-1zM326 247h1v1h-1zM329 247h1v1h-1zM332 247h1v1h-1zM342 247h1v1h-1zM345 247h1v1h-1zM348 247h1v1h-1zM358 247h1v1h-1zM361 247h1v1h-1zM364 247h1v1h-1zM374 247h1v1h-1zM377 247h1v1h-1zM380 247h1v1h-1zM390 247h1v1h-1zM393 247h1v1h-1zM396 247h1v1h-1zM406 247h1v1h-1zM409 247h1v1h-1zM412 247h1v1h-1zM421 247h1v1h-1zM425 247h1v1h-1zM428 247h1v1h-1zM437 247h1v1h-1zM441 247h1v1h-1zM444 247h1v1h-1zM453 247h1v1h-1zM456 247h1v1h-1zM469 247h1v1h-1zM472 247h1v1h-1zM485 247h1v1h-1zM488 247h1v1h-1zM501 247h1v1h-1zM504 247h1v1h-1zM517 247h1v1h-1zM520 247h1v1h-1zM533 247h1v1h-1zM536 247h1v1h-1zM549 247h1v1h-1zM552 247h1v1h-1zM565 247h1v1h-1zM568 247h1v1h-1zM578 247h1v1h-1zM582 247h1v1h-1zM585 247h1v1h-1zM594 247h1v1h-1zM598 247h1v1h-1zM601 247h1v1h-1zM610 247h1v1h-1zM613 247h1v1h-1zM617 247h1v1h-1zM626 247h1v1h-1zM629 247h1v1h-1zM633 247h1v1h-1zM642 247h1v1h-1zM645 247h1v1h-1zM649 247h1v1h-1zM658 247h1v1h-1zM661 247h1v1h-1zM664 247h1v1h-1zM674 247h1v1h-1zM677 247h1v1h-1zM680 247h1v1h-1zM690 247h1v1h-1zM693 247h1v1h-1zM696 247h1v1h-1zM89 342h1v1h-1zM92 342h1v1h-1zM105 342h1v1h-1zM108 342h1v1h-1zM121 342h1v1h-1zM124 342h1v1h-1zM137 342h1v1h-1zM140 342h1v1h-1zM153 342h1v1h-1zM156 342h1v1h-1zM169 342h1v1h-1zM172 342h1v1h-1zM185 342h1v1h-1zM188 342h1v1h-1zM201 342h1v1h-1zM204 342h1v1h-1zM214 342h1v1h-1zM217 342h1v1h-1zM220 342h1v1h-1zM230 342h1v1h-1zM233 342h1v1h-1zM236 342h1v1h-1zM246 342h1v1h-1zM249 342h1v1h-1zM252 342h1v1h-1zM262 342h1v1h-1zM265 342h1v1h-1zM268 342h1v1h-1zM278 342h1v1h-1zM281 342h1v1h-1zM284 342h1v1h-1zM294 342h1v1h-1zM297 342h1v1h-1zM300 342h1v1h-1zM310 342h1v1h-1zM313 342h1v1h-1zM316 342h1v1h-1zM326 342h1v1h-1zM329 342h1v1h-1zM332 342h1v1h-1zM342 342h1v1h-1zM345 342h1v1h-1zM348 342h1v1h-1zM358 342h1v1h-1zM361 342h1v1h-1zM364 342h1v1h-1zM374 342h1v1h-1zM377 342h1v1h-1zM380 342h1v1h-1zM390 342h1v1h-1zM393 342h1v1h-1zM396 342h1v1h-1zM406 342h1v1h-1zM409 342h1v1h-1zM412 342h1v1h-1zM421 342h1v1h-1zM425 342h1v1h-1zM428 342h1v1h-1zM437 342h1v1h-1zM441 342h1v1h-1zM444 342h1v1h-1zM453 342h1v1h-1zM456 342h1v1h-1zM469 342h1v1h-1zM472 342h1v1h-1zM485 342h1v1h-1zM488 342h1v1h-1zM501 342h1v1h-1zM504 342h1v1h-1zM517 342h1v1h-1zM520 342h1v1h-1zM533 342h1v1h-1zM536 342h1v1h-1zM549 342h1v1h-1zM552 342h1v1h-1zM565 342h1v1h-1zM568 342h1v1h-1zM578 342h1v1h-1zM582 342h1v1h-1zM585 342h1v1h-1zM594 342h1v1h-1zM598 342h1v1h-1zM601 342h1v1h-1zM610 342h1v1h-1zM613 342h1v1h-1zM617 342h1v1h-1zM626 342h1v1h-1zM629 342h1v1h-1zM633 342h1v1h-1zM642 342h1v1h-1zM645 342h1v1h-1zM649 342h1v1h-1zM658 342h1v1h-1zM661 342h1v1h-1zM664 342h1v1h-1zM674 342h1v1h-1zM677 342h1v1h-1zM680 342h1v1h-1zM690 342h1v1h-1zM693 342h1v1h-1zM696 342h1v1h-1zM89 379h1v1h-1zM92 379h1v1h-1zM105 379h1v1h-1zM108 379h1v1h-1zM121 379h1v1h-1zM124 379h1v1h-1zM137 379h1v1h-1zM140 379h1v1h-1zM153 379h1v1h-1zM156 379h1v1h-1zM169 379h1v1h-1zM172 379h1v1h-1zM185 379h1v1h-1zM188 379h1v1h-1zM201 379h1v1h-1zM204 379h1v1h-1zM214 379h1v1h-1zM217 379h1v1h-1zM220 379h1v1h-1zM230 379h1v1h-1zM233 379h1v1h-1zM236 379h1v1h-1zM246 379h1v1h-1zM249 379h1v1h-1zM252 379h1v1h-1zM262 379h1v1h-1zM265 379h1v1h-1zM268 379h1v1h-1zM278 379h1v1h-1zM281 379h1v1h-1zM284 379h1v1h-1zM294 379h1v1h-1zM297 379h1v1h-1zM300 379h1v1h-1zM310 379h1v1h-1zM313 379h1v1h-1zM316 379h1v1h-1zM326 379h1v1h-1zM329 379h1v1h-1zM332 379h1v1h-1zM342 379h1v1h-1zM345 379h1v1h-1zM348 379h1v1h-1zM358 379h1v1h-1zM361 379h1v1h-1zM364 379h1v1h-1zM374 379h1v1h-1zM377 379h1v1h-1zM380 379h1v1h-1zM390 379h1v1h-1zM393 379h1v1h-1zM396 379h1v1h-1zM406 379h1v1h-1zM409 379h1v1h-1zM412 379h1v1h-1zM421 379h1v1h-1zM425 379h1v1h-1zM428 379h1v1h-1zM437 379h1v1h-1zM441 379h1v1h-1zM444 379h1v1h-1zM453 379h1v1h-1zM456 379h1v1h-1zM469 379h1v1h-1zM472 379h1v1h-1zM485 379h1v1h-1zM488 379h1v1h-1zM501 379h1v1h-1zM504 379h1v1h-1zM517 379h1v1h-1zM520 379h1v1h-1zM533 379h1v1h-1zM536 379h1v1h-1zM549 379h1v1h-1zM552 379h1v1h-1zM565 379h1v1h-1zM568 379h1v1h-1zM578 379h1v1h-1zM582 379h1v1h-1zM585 379h1v1h-1zM594 379h1v1h-1zM598 379h1v1h-1zM601 379h1v1h-1zM610 379h1v1h-1zM613 379h1v1h-1zM617 379h1v1h-1zM626 379h1v1h-1zM629 379h1v1h-1zM633 379h1v1h-1zM642 379h1v1h-1zM645 379h1v1h-1zM649 379h1v1h-1zM658 379h1v1h-1zM661 379h1v1h-1zM664 379h1v1h-1zM674 379h1v1h-1zM677 379h1v1h-1zM680 379h1v1h-1zM690 379h1v1h-1zM693 379h1v1h-1zM696 379h1v1h-1zM89 417h1v1h-1zM92 417h1v1h-1zM105 417h1v1h-1zM108 417h1v1h-1zM121 417h1v1h-1zM124 417h1v1h-1zM137 417h1v1h-1zM140 417h1v1h-1zM153 417h1v1h-1zM156 417h1v1h-1zM169 417h1v1h-1zM172 417h1v1h-1zM185 417h1v1h-1zM188 417h1v1h-1zM201 417h1v1h-1zM204 417h1v1h-1zM214 417h1v1h-1zM217 417h1v1h-1zM220 417h1v1h-1zM230 417h1v1h-1zM233 417h1v1h-1zM236 417h1v1h-1zM246 417h1v1h-1zM249 417h1v1h-1zM252 417h1v1h-1zM262 417h1v1h-1zM265 417h1v1h-1zM268 417h1v1h-1zM278 417h1v1h-1zM281 417h1v1h-1zM284 417h1v1h-1zM294 417h1v1h-1zM297 417h1v1h-1zM300 417h1v1h-1zM310 417h1v1h-1zM313 417h1v1h-1zM316 417h1v1h-1zM326 417h1v1h-1zM329 417h1v1h-1zM332 417h1v1h-1zM342 417h1v1h-1zM345 417h1v1h-1zM348 417h1v1h-1zM358 417h1v1h-1zM361 417h1v1h-1zM364 417h1v1h-1zM374 417h1v1h-1zM377 417h1v1h-1zM380 417h1v1h-1zM390 417h1v1h-1zM393 417h1v1h-1zM396 417h1v1h-1zM406 417h1v1h-1zM409 417h1v1h-1zM412 417h1v1h-1zM421 417h1v1h-1zM425 417h1v1h-1zM428 417h1v1h-1zM437 417h1v1h-1zM441 417h1v1h-1zM444 417h1v1h-1zM453 417h1v1h-1zM456 417h1v1h-1zM469 417h1v1h-1zM472 417h1v1h-1zM485 417h1v1h-1zM488 417h1v1h-1zM501 417h1v1h-1zM504 417h1v1h-1zM517 417h1v1h-1zM520 417h1v1h-1zM533 417h1v1h-1zM536 417h1v1h-1zM549 417h1v1h-1zM552 417h1v1h-1zM565 417h1v1h-1zM568 417h1v1h-1zM578 417h1v1h-1zM582 417h1v1h-1zM585 417h1v1h-1zM594 417h1v1h-1zM598 417h1v1h-1zM601 417h1v1h-1zM610 417h1v1h-1zM613 417h1v1h-1zM617 417h1v1h-1zM626 417h1v1h-1zM629 417h1v1h-1zM633 417h1v1h-1zM642 417h1v1h-1zM645 417h1v1h-1zM649 417h1v1h-1zM658 417h1v1h-1zM661 417h1v1h-1zM664 417h1v1h-1zM674 417h1v1h-1zM677 417h1v1h-1zM680 417h1v1h-1zM690 417h1v1h-1zM693 417h1v1h-1zM696 417h1v1h-1zM89 436h1v1h-1zM92 436h1v1h-1zM105 436h1v1h-1zM108 436h1v1h-1zM121 436h1v1h-1zM124 436h1v1h-1zM137 436h1v1h-1zM140 436h1v1h-1zM153 436h1v1h-1zM156 436h1v1h-1zM169 436h1v1h-1zM172 436h1v1h-1zM185 436h1v1h-1zM188 436h1v1h-1zM201 436h1v1h-1zM204 436h1v1h-1zM214 436h1v1h-1zM217 436h1v1h-1zM220 436h1v1h-1zM230 436h1v1h-1zM233 436h1v1h-1zM236 436h1v1h-1zM246 436h1v1h-1zM249 436h1v1h-1zM252 436h1v1h-1zM262 436h1v1h-1zM265 436h1v1h-1zM268 436h1v1h-1zM278 436h1v1h-1zM281 436h1v1h-1zM284 436h1v1h-1zM294 436h1v1h-1zM297 436h1v1h-1zM300 436h1v1h-1zM310 436h1v1h-1zM313 436h1v1h-1zM316 436h1v1h-1zM326 436h1v1h-1zM329 436h1v1h-1zM332 436h1v1h-1zM342 436h1v1h-1zM345 436h1v1h-1zM348 436h1v1h-1zM358 436h1v1h-1zM361 436h1v1h-1zM364 436h1v1h-1zM374 436h1v1h-1zM377 436h1v1h-1zM380 436h1v1h-1zM390 436h1v1h-1zM393 436h1v1h-1zM396 436h1v1h-1zM406 436h1v1h-1zM409 436h1v1h-1zM412 436h1v1h-1zM421 436h1v1h-1zM425 436h1v1h-1zM428 436h1v1h-1zM437 436h1v1h-1zM441 436h1v1h-1zM444 436h1v1h-1zM453 436h1v1h-1zM456 436h1v1h-1zM469 436h1v1h-1zM472 436h1v1h-1zM485 436h1v1h-1zM488 436h1v1h-1zM501 436h1v1h-1zM504 436h1v1h-1zM517 436h1v1h-1zM520 436h1v1h-1zM533 436h1v1h-1zM536 436h1v1h-1zM549 436h1v1h-1zM552 436h1v1h-1zM565 436h1v1h-1zM568 436h1v1h-1zM578 436h1v1h-1zM582 436h1v1h-1zM585 436h1v1h-1zM594 436h1v1h-1zM598 436h1v1h-1zM601 436h1v1h-1zM610 436h1v1h-1zM613 436h1v1h-1zM617 436h1v1h-1zM626 436h1v1h-1zM629 436h1v1h-1zM633 436h1v1h-1zM642 436h1v1h-1zM645 436h1v1h-1zM649 436h1v1h-1zM658 436h1v1h-1zM661 436h1v1h-1zM664 436h1v1h-1zM674 436h1v1h-1zM677 436h1v1h-1zM680 436h1v1h-1zM690 436h1v1h-1zM693 436h1v1h-1zM696 436h1v1h-1zM89 455h1v1h-1zM92 455h1v1h-1zM105 455h1v1h-1zM108 455h1v1h-1zM121 455h1v1h-1zM124 455h1v1h-1zM137 455h1v1h-1zM140 455h1v1h-1zM153 455h1v1h-1zM156 455h1v1h-1zM169 455h1v1h-1zM172 455h1v1h-1zM185 455h1v1h-1zM188 455h1v1h-1zM201 455h1v1h-1zM204 455h1v1h-1zM214 455h1v1h-1zM217 455h1v1h-1zM220 455h1v1h-1zM230 455h1v1h-1zM233 455h1v1h-1zM236 455h1v1h-1zM246 455h1v1h-1zM249 455h1v1h-1zM252 455h1v1h-1zM262 455h1v1h-1zM265 455h1v1h-1zM268 455h1v1h-1zM278 455h1v1h-1zM281 455h1v1h-1zM284 455h1v1h-1zM294 455h1v1h-1zM297 455h1v1h-1zM300 455h1v1h-1zM310 455h1v1h-1zM313 455h1v1h-1zM316 455h1v1h-1zM326 455h1v1h-1zM329 455h1v1h-1zM332 455h1v1h-1zM342 455h1v1h-1zM345 455h1v1h-1zM348 455h1v1h-1zM358 455h1v1h-1zM361 455h1v1h-1zM364 455h1v1h-1zM374 455h1v1h-1zM377 455h1v1h-1zM380 455h1v1h-1zM390 455h1v1h-1zM393 455h1v1h-1zM396 455h1v1h-1zM406 455h1v1h-1zM409 455h1v1h-1zM412 455h1v1h-1zM421 455h1v1h-1zM425 455h1v1h-1zM428 455h1v1h-1zM437 455h1v1h-1zM441 455h1v1h-1zM444 455h1v1h-1zM453 455h1v1h-1zM456 455h1v1h-1zM469 455h1v1h-1zM472 455h1v1h-1zM485 455h1v1h-1zM488 455h1v1h-1zM501 455h1v1h-1zM504 455h1v1h-1zM517 455h1v1h-1zM520 455h1v1h-1zM533 455h1v1h-1zM536 455h1v1h-1zM549 455h1v1h-1zM552 455h1v1h-1zM565 455h1v1h-1zM568 455h1v1h-1zM578 455h1v1h-1zM582 455h1v1h-1zM585 455h1v1h-1zM594 455h1v1h-1zM598 455h1v1h-1zM601 455h1v1h-1zM610 455h1v1h-1zM613 455h1v1h-1zM617 455h1v1h-1zM626 455h1v1h-1zM629 455h1v1h-1zM633 455h1v1h-1zM642 455h1v1h-1zM645 455h1v1h-1zM649 455h1v1h-1zM658 455h1v1h-1zM661 455h1v1h-1zM664 455h1v1h-1zM674 455h1v1h-1zM677 455h1v1h-1zM680 455h1v1h-1zM690 455h1v1h-1zM693 455h1v1h-1zM696 455h1v1h-1zM89 474h1v1h-1zM92 474h1v1h-1zM105 474h1v1h-1zM108 474h1v1h-1zM121 474h1v1h-1zM124 474h1v1h-1zM137 474h1v1h-1zM140 474h1v1h-1zM153 474h1v1h-1zM156 474h1v1h-1zM169 474h1v1h-1zM172 474h1v1h-1zM185 474h1v1h-1zM188 474h1v1h-1zM201 474h1v1h-1zM204 474h1v1h-1zM214 474h1v1h-1zM217 474h1v1h-1zM220 474h1v1h-1zM230 474h1v1h-1zM233 474h1v1h-1zM236 474h1v1h-1zM246 474h1v1h-1zM249 474h1v1h-1zM252 474h1v1h-1zM262 474h1v1h-1zM265 474h1v1h-1zM268 474h1v1h-1zM278 474h1v1h-1zM281 474h1v1h-1zM284 474h1v1h-1zM294 474h1v1h-1zM297 474h1v1h-1zM300 474h1v1h-1zM310 474h1v1h-1zM313 474h1v1h-1zM316 474h1v1h-1zM326 474h1v1h-1zM329 474h1v1h-1zM332 474h1v1h-1zM342 474h1v1h-1zM345 474h1v1h-1zM348 474h1v1h-1zM358 474h1v1h-1zM361 474h1v1h-1zM364 474h1v1h-1zM374 474h1v1h-1zM377 474h1v1h-1zM380 474h1v1h-1zM390 474h1v1h-1zM393 474h1v1h-1zM396 474h1v1h-1zM406 474h1v1h-1zM409 474h1v1h-1zM412 474h1v1h-1zM421 474h1v1h-1zM425 474h1v1h-1zM428 474h1v1h-1zM437 474h1v1h-1zM441 474h1v1h-1zM444 474h1v1h-1zM453 474h1v1h-1zM456 474h1v1h-1zM469 474h1v1h-1zM472 474h1v1h-1zM485 474h1v1h-1zM488 474h1v1h-1zM501 474h1v1h-1zM504 474h1v1h-1zM517 474h1v1h-1zM520 474h1v1h-1zM533 474h1v1h-1zM536 474h1v1h-1zM549 474h1v1h-1zM552 474h1v1h-1zM565 474h1v1h-1zM568 474h1v1h-1zM578 474h1v1h-1zM582 474h1v1h-1zM585 474h1v1h-1zM594 474h1v1h-1zM598 474h1v1h-1zM601 474h1v1h-1zM610 474h1v1h-1zM613 474h1v1h-1zM617 474h1v1h-1zM626 474h1v1h-1zM629 474h1v1h-1zM633 474h1v1h-1zM642 474h1v1h-1zM645 474h1v1h-1zM649 474h1v1h-1zM658 474h1v1h-1zM661 474h1v1h-1zM664 474h1v1h-1zM674 474h1v1h-1zM677 474h1v1h-1zM680 474h1v1h-1zM690 474h1v1h-1zM693 474h1v1h-1zM696 474h1v1h-1z" fill="#fff"/>
<path d="M82 114h3v1h-3zM82 133h3v1h-3zM82 152h3v1h-3zM82 171h3v1h-3zM82 209h3v1h-3zM82 247h3v1h-3zM82 342h3v1h-3zM82 379h3v1h-3zM82 417h3v1h-3zM82 436h3v1h-3zM82 455h3v1h-3zM82 474h3v1h-3zM82 493h3v1h-3zM82 143h3v1h-3zM82 181h3v1h-3zM82 219h3v1h-3zM82 237h3v1h-3zM82 256h3v1h-3zM82 275h3v1h-3zM82 294h3v1h-3zM82 313h3v1h-3zM82 351h3v1h-3zM82 389h3v1h-3zM82 484h3v1h-3z" fill="#fff"/>
<text x="75" y="117.0" fill="#fff" stroke="#fff" stroke-width="0.35" font-size="6.2" font-family="Liberation Sans" textLength="6" lengthAdjust="spacingAndGlyphs">20</text>
<text x="75" y="135.9" fill="#fff" stroke="#fff" stroke-width="0.35" font-size="6.2" font-family="Liberation Sans" textLength="6" lengthAdjust="spacingAndGlyphs">18</text>
<text x="75" y="154.9" fill="#fff" stroke="#fff" stroke-width="0.35" font-size="6.2" font-family="Liberation Sans" textLength="6" lengthAdjust="spacingAndGlyphs">16</text>
<text x="75" y="173.8" fill="#fff" stroke="#fff" stroke-width="0.35" font-size="6.2" font-family="Liberation Sans" textLength="6" lengthAdjust="spacingAndGlyphs">14</text>
<text x="75" y="192.7" fill="#fff" stroke="#fff" stroke-width="0.35" font-size="6.2" font-family="Liberation Sans" textLength="6" lengthAdjust="spacingAndGlyphs">12</text>
<text x="75" y="211.7" fill="#fff" stroke="#fff" stroke-width="0.35" font-size="6.2" font-family="Liberation Sans" textLength="6" lengthAdjust="spacingAndGlyphs">10</text>
<text x="78" y="230.6" fill="#fff" stroke="#fff" stroke-width="0.35" font-size="6.2" font-family="Liberation Sans" textLength="3" lengthAdjust="spacingAndGlyphs">8</text>
<text x="78" y="249.5" fill="#fff" stroke="#fff" stroke-width="0.35" font-size="6.2" font-family="Liberation Sans" textLength="3" lengthAdjust="spacingAndGlyphs">6</text>
<text x="78" y="268.5" fill="#fff" stroke="#fff" stroke-width="0.35" font-size="6.2" font-family="Liberation Sans" textLength="3" lengthAdjust="spacingAndGlyphs">4</text>
<text x="78" y="287.4" fill="#fff" stroke="#fff" stroke-width="0.35" font-size="6.2" font-family="Liberation Sans" textLength="3" lengthAdjust="spacingAndGlyphs">2</text>
<text x="78" y="306.4" fill="#fff" stroke="#fff" stroke-width="0.35" font-size="6.2" font-family="Liberation Sans" textLength="3" lengthAdjust="spacingAndGlyphs">0</text>
<text x="78" y="325.3" fill="#fff" stroke="#fff" stroke-width="0.35" font-size="6.2" font-family="Liberation Sans" textLength="3" lengthAdjust="spacingAndGlyphs">2</text>
<text x="78" y="344.2" fill="#fff" stroke="#fff" stroke-width="0.35" font-size="6.2" font-family="Liberation Sans" textLength="3" lengthAdjust="spacingAndGlyphs">4</text>
<text x="78" y="363.2" fill="#fff" stroke="#fff" stroke-width="0.35" font-size="6.2" font-family="Liberation Sans" textLength="3" lengthAdjust="spacingAndGlyphs">6</text>
<text x="78" y="382.1" fill="#fff" stroke="#fff" stroke-width="0.35" font-size="6.2" font-family="Liberation Sans" textLength="3" lengthAdjust="spacingAndGlyphs">8</text>
<text x="75" y="401.0" fill="#fff" stroke="#fff" stroke-width="0.35" font-size="6.2" font-family="Liberation Sans" textLength="6" lengthAdjust="spacingAndGlyphs">10</text>
<text x="75" y="420.0" fill="#fff" stroke="#fff" stroke-width="0.35" font-size="6.2" font-family="Liberation Sans" textLength="6" lengthAdjust="spacingAndGlyphs">12</text>
<text x="75" y="438.9" fill="#fff" stroke="#fff" stroke-width="0.35" font-size="6.2" font-family="Liberation Sans" textLength="6" lengthAdjust="spacingAndGlyphs">14</text>
<text x="75" y="457.8" fill="#fff" stroke="#fff" stroke-width="0.35" font-size="6.2" font-family="Liberation Sans" textLength="6" lengthAdjust="spacingAndGlyphs">16</text>
<text x="75" y="476.8" fill="#fff" stroke="#fff" stroke-width="0.35" font-size="6.2" font-family="Liberation Sans" textLength="6" lengthAdjust="spacingAndGlyphs">18</text>
<text x="75" y="495.7" fill="#fff" stroke="#fff" stroke-width="0.35" font-size="6.2" font-family="Liberation Sans" textLength="6" lengthAdjust="spacingAndGlyphs">20</text>
<rect x="82" y="493" width="621" height="1" fill="#fff"/>
<text x="93.5" y="502.8" fill="#fff" stroke="#fff" stroke-width="0.3" font-size="6.9" font-family="Liberation Sans" textLength="19" lengthAdjust="spacingAndGlyphs">5:40:07</text>
<text x="124.5" y="502.8" fill="#fff" stroke="#fff" stroke-width="0.3" font-size="6.9" font-family="Liberation Sans" textLength="19" lengthAdjust="spacingAndGlyphs">5:41:07</text>
<text x="155.5" y="502.8" fill="#fff" stroke="#fff" stroke-width="0.3" font-size="6.9" font-family="Liberation Sans" textLength="19" lengthAdjust="spacingAndGlyphs">5:42:07</text>
<text x="186.5" y="502.8" fill="#fff" stroke="#fff" stroke-width="0.3" font-size="6.9" font-family="Liberation Sans" textLength="19" lengthAdjust="spacingAndGlyphs">5:43:07</text>
<text x="217.5" y="502.8" fill="#fff" stroke="#fff" stroke-width="0.3" font-size="6.9" font-family="Liberation Sans" textLength="19" lengthAdjust="spacingAndGlyphs">5:44:07</text>
<text x="248.5" y="502.8" fill="#fff" stroke="#fff" stroke-width="0.3" font-size="6.9" font-family="Liberation Sans" textLength="19" lengthAdjust="spacingAndGlyphs">5:45:07</text>
<text x="279.5" y="502.8" fill="#fff" stroke="#fff" stroke-width="0.3" font-size="6.9" font-family="Liberation Sans" textLength="19" lengthAdjust="spacingAndGlyphs">5:46:07</text>
<text x="310.5" y="502.8" fill="#fff" stroke="#fff" stroke-width="0.3" font-size="6.9" font-family="Liberation Sans" textLength="19" lengthAdjust="spacingAndGlyphs">5:47:07</text>
<text x="341.5" y="502.8" fill="#fff" stroke="#fff" stroke-width="0.3" font-size="6.9" font-family="Liberation Sans" textLength="19" lengthAdjust="spacingAndGlyphs">5:48:07</text>
<text x="372.5" y="502.8" fill="#fff" stroke="#fff" stroke-width="0.3" font-size="6.9" font-family="Liberation Sans" textLength="19" lengthAdjust="spacingAndGlyphs">5:49:07</text>
<text x="403.5" y="502.8" fill="#fff" stroke="#fff" stroke-width="0.3" font-size="6.9" font-family="Liberation Sans" textLength="19" lengthAdjust="spacingAndGlyphs">5:40:07</text>
<text x="434.5" y="502.8" fill="#fff" stroke="#fff" stroke-width="0.3" font-size="6.9" font-family="Liberation Sans" textLength="19" lengthAdjust="spacingAndGlyphs">5:41:07</text>
<text x="465.5" y="502.8" fill="#fff" stroke="#fff" stroke-width="0.3" font-size="6.9" font-family="Liberation Sans" textLength="19" lengthAdjust="spacingAndGlyphs">5:42:07</text>
<text x="496.5" y="502.8" fill="#fff" stroke="#fff" stroke-width="0.3" font-size="6.9" font-family="Liberation Sans" textLength="19" lengthAdjust="spacingAndGlyphs">5:43:07</text>
<text x="527.5" y="502.8" fill="#fff" stroke="#fff" stroke-width="0.3" font-size="6.9" font-family="Liberation Sans" textLength="19" lengthAdjust="spacingAndGlyphs">5:44:07</text>
<text x="558.5" y="502.8" fill="#fff" stroke="#fff" stroke-width="0.3" font-size="6.9" font-family="Liberation Sans" textLength="19" lengthAdjust="spacingAndGlyphs">5:45:07</text>
<text x="589.5" y="502.8" fill="#fff" stroke="#fff" stroke-width="0.3" font-size="6.9" font-family="Liberation Sans" textLength="19" lengthAdjust="spacingAndGlyphs">5:46:07</text>
<text x="620.5" y="502.8" fill="#fff" stroke="#fff" stroke-width="0.3" font-size="6.9" font-family="Liberation Sans" textLength="19" lengthAdjust="spacingAndGlyphs">5:47:07</text>
<text x="651.5" y="502.8" fill="#fff" stroke="#fff" stroke-width="0.3" font-size="6.9" font-family="Liberation Sans" textLength="19" lengthAdjust="spacingAndGlyphs">5:48:07</text>
<text x="682.5" y="502.8" fill="#fff" stroke="#fff" stroke-width="0.3" font-size="6.9" font-family="Liberation Sans" textLength="19" lengthAdjust="spacingAndGlyphs">5:49:07</text>
<path d="M101 492h1v3h-1zM132 492h1v3h-1zM163 492h1v3h-1zM194 492h1v3h-1zM225 492h1v3h-1zM256 492h1v3h-1zM287 492h1v3h-1zM380 492h1v3h-1zM411 492h1v3h-1zM442 492h1v3h-1zM473 492h1v3h-1zM504 492h1v3h-1zM535 492h1v3h-1zM566 492h1v3h-1zM597 492h1v3h-1zM690 492h1v3h-1z" fill="#fff"/>
<path d="M251 114h1v6h-1zM251 122h1v1h-1zM251 125h1v6h-1zM251 133h1v1h-1zM251 137h1v6h-1zM251 145h1v1h-1zM251 148h1v6h-1zM251 156h1v1h-1zM251 160h1v6h-1zM251 168h1v1h-1zM251 171h1v6h-1zM251 179h1v1h-1zM251 182h1v6h-1zM251 190h1v1h-1zM251 194h1v6h-1zM251 202h1v1h-1zM251 205h1v6h-1zM251 213h1v1h-1zM251 217h1v6h-1zM251 225h1v1h-1zM251 228h1v6h-1zM251 236h1v1h-1zM251 239h1v6h-1zM251 247h1v1h-1zM251 251h1v6h-1zM251 259h1v1h-1zM251 262h1v6h-1zM251 270h1v1h-1zM251 274h1v6h-1zM251 282h1v1h-1zM251 285h1v6h-1zM251 293h1v1h-1zM251 296h1v6h-1zM251 304h1v1h-1zM251 308h1v6h-1zM251 316h1v1h-1zM251 319h1v6h-1zM251 327h1v1h-1zM251 331h1v6h-1zM251 339h1v1h-1zM251 342h1v6h-1zM251 350h1v1h-1zM251 353h1v6h-1zM251 361h1v1h-1zM251 365h1v6h-1zM251 373h1v1h-1zM251 376h1v6h-1zM251 384h1v1h-1zM251 388h1v6h-1zM251 396h1v1h-1zM251 399h1v6h-1zM251 407h1v1h-1zM251 410h1v6h-1zM251 418h1v1h-1zM251 422h1v6h-1zM251 430h1v1h-1zM251 433h1v6h-1zM251 441h1v1h-1zM251 445h1v6h-1zM251 453h1v1h-1zM251 456h1v6h-1zM251 464h1v1h-1zM251 467h1v6h-1zM251 475h1v1h-1zM251 479h1v6h-1zM251 487h1v1h-1zM251 490h1v3h-1z" fill="#f00"/>
<rect x="81" y="302" width="179" height="1" fill="#3a80d8"/>
<rect x="82" y="303" width="178" height="2" fill="#ff8a1c"/>
<rect x="110" y="295" width="3" height="1" fill="#3a80d8"/>
<rect x="111" y="296" width="1" height="2" fill="#3a80d8"/>
<rect x="111" y="299" width="1" height="3" fill="#3a80d8"/>
<rect x="112" y="305" width="1" height="6" fill="#3a80d8"/>
<rect x="113" y="310" width="1" height="2" fill="#3a80d8"/>
<rect x="116" y="294" width="4" height="1" fill="#3a80d8"/>
<rect x="117" y="295" width="1" height="4" fill="#3a80d8"/>
<rect x="117" y="298" width="2" height="1" fill="#3a80d8"/>
<rect x="114" y="302" width="3" height="1" fill="#3a80d8"/>
<rect x="113" y="299" width="2" height="3" fill="#ff8a1c"/>
<rect x="117" y="300" width="3" height="3" fill="#ff8a1c"/>
<rect x="114" y="305" width="7" height="4" fill="#ff8a1c"/>
<rect x="113" y="304" width="9" height="3" fill="#ff8a1c"/>
<rect x="115" y="309" width="5" height="2" fill="#ff8a1c"/>
<rect x="118" y="303" width="4" height="5" fill="#ff8a1c"/>
<rect x="115" y="309" width="4" height="1" fill="#ff8a1c"/>
<rect x="116" y="310" width="1" height="2" fill="#ff8a1c"/>
<rect x="116" y="313" width="2" height="1" fill="#ff8a1c"/>
<rect x="122" y="297" width="3" height="2" fill="#ff8a1c"/>
<rect x="123" y="299" width="1" height="11" fill="#ff8a1c"/>
<rect x="123" y="309" width="2" height="2" fill="#ff8a1c"/>
<rect x="124" y="300" width="5" height="1" fill="#3a80d8"/>
<rect x="125" y="305" width="1" height="7" fill="#3a80d8"/>
<rect x="126" y="312" width="2" height="1" fill="#3a80d8"/>
<rect x="120" y="304" width="2" height="3" fill="#3a80d8"/>
<rect x="130" y="295" width="3" height="1" fill="#3a80d8"/>
<rect x="131" y="296" width="1" height="3" fill="#3a80d8"/>
<rect x="131" y="306" width="2" height="3" fill="#3a80d8"/>
<rect x="132" y="309" width="1" height="3" fill="#3a80d8"/>
<rect x="125" y="303" width="9" height="2" fill="#ff8a1c"/>
<rect x="126" y="305" width="6" height="1" fill="#ff8a1c"/>
<rect x="134" y="302" width="3" height="3" fill="#ff8a1c"/>
<rect x="137" y="298" width="2" height="4" fill="#ff8a1c"/>
<rect x="138" y="295" width="2" height="3" fill="#ff8a1c"/>
<rect x="139" y="294" width="2" height="2" fill="#ff8a1c"/>
<rect x="140" y="292" width="2" height="3" fill="#ff8a1c"/>
<rect x="136" y="301" width="2" height="2" fill="#ff8a1c"/>
<rect x="142" y="298" width="3" height="3" fill="#3a80d8"/>
<rect x="141" y="301" width="2" height="2" fill="#3a80d8"/>
<rect x="144" y="300" width="2" height="2" fill="#3a80d8"/>
<rect x="140" y="303" width="6" height="2" fill="#ff8a1c"/>
<rect x="143" y="307" width="1" height="5" fill="#ff8a1c"/>
<rect x="141" y="311" width="3" height="3" fill="#ff8a1c"/>
<rect x="201" y="298" width="1" height="12" fill="#ff8a1c"/>
<rect x="202" y="305" width="2" height="5" fill="#ff8a1c"/>
<rect x="202" y="298" width="1" height="3" fill="#3a80d8"/>
<rect x="205" y="306" width="1" height="3" fill="#3a80d8"/>
<rect x="208" y="306" width="1" height="6" fill="#3a80d8"/>
<rect x="212" y="308" width="1" height="9" fill="#3a80d8"/>
<rect x="210" y="315" width="1" height="12" fill="#3a80d8"/>
<rect x="209" y="326" width="2" height="2" fill="#3a80d8"/>
<rect x="206" y="302" width="4" height="1" fill="#3a80d8"/>
<rect x="212" y="301" width="8" height="1" fill="#3a80d8"/>
<rect x="219" y="296" width="5" height="8" fill="#ff8a1c"/>
<rect x="218" y="299" width="3" height="3" fill="#ff8a1c"/>
<rect x="221" y="295" width="2" height="2" fill="#ff8a1c"/>
<rect x="216" y="300" width="4" height="3" fill="#3a80d8"/>
<rect x="220" y="302" width="6" height="2" fill="#3a80d8"/>
<rect x="226" y="280" width="1" height="10" fill="#ff8a1c"/>
<rect x="225" y="288" width="3" height="3" fill="#ff8a1c"/>
<rect x="226" y="291" width="1" height="5" fill="#3a80d8"/>
<rect x="229" y="293" width="1" height="11" fill="#ff8a1c"/>
<rect x="232" y="293" width="2" height="10" fill="#ff8a1c"/>
<rect x="231" y="303" width="3" height="2" fill="#ff8a1c"/>
<rect x="231" y="305" width="2" height="2" fill="#3a80d8"/>
<rect x="231" y="309" width="1" height="14" fill="#3a80d8"/>
<rect x="231" y="325" width="1" height="3" fill="#3a80d8"/>
<rect x="228" y="232" width="1" height="40" fill="#ff8a1c"/>
<rect x="228" y="272" width="1" height="4" fill="#3a80d8"/>
<rect x="226" y="252" width="1" height="30" fill="#ff8a1c"/>
<rect x="226" y="260" width="4" height="3" fill="#ff8a1c"/>
<rect x="226" y="264" width="1" height="1" fill="#3a80d8"/>
<rect x="229" y="264" width="1" height="1" fill="#3a80d8"/>
<rect x="226" y="139" width="3" height="3" fill="#ff8a1c"/>
<rect x="227" y="141" width="1" height="37" fill="#ff8a1c"/>
<rect x="227" y="178" width="1" height="14" fill="#3a80d8"/>
<rect x="226" y="155" width="3" height="1" fill="#3a80d8"/>
<text x="0" y="0" transform="translate(488.5,300) rotate(-27)" fill="#b0c8be" font-size="15.5" font-family="Liberation Serif" textLength="80" lengthAdjust="spacingAndGlyphs" shape-rendering="auto">COTECNO</text>
<rect x="19" y="528" width="3" height="2" fill="#3a80d8"/><rect x="20" y="530" width="1" height="1" fill="#3a80d8"/>
<rect x="96" y="529" width="3" height="2" fill="#ff8a1c"/>
<text x="36" y="532.3" fill="#e8e8e8" stroke="#e8e8e8" stroke-width="0.25" font-size="4.4" font-family="Liberation Sans" textLength="18" lengthAdjust="spacingAndGlyphs">P1(Pa)</text>
<text x="113" y="532.3" fill="#e8e8e8" stroke="#e8e8e8" stroke-width="0.25" font-size="4.4" font-family="Liberation Sans" textLength="18" lengthAdjust="spacingAndGlyphs">P2(Pa)</text>
</svg>
<div class="a" style="left:6px;top:538px;width:767px;height:12px;background:#fff"></div>
<div class="a" style="left:6px;top:538px;width:337px;height:12px;background:#f0f0f0;border-right:1px solid #808080;border-bottom:1px solid #808080"></div>
<div class="a" style="left:6px;top:538px;width:8px;height:12px;background:#f0f0f0;border-right:1px solid #808080;border-bottom:1px solid #808080"></div>
<svg class="a" style="left:8px;top:541px" width="4" height="6"><path d="M3 0 V6 L0 3 Z" fill="#000"/></svg>
<div class="a" style="left:765px;top:538px;width:8px;height:12px;background:#f0f0f0;border-right:1px solid #808080;border-bottom:1px solid #808080"></div>
<svg class="a" style="left:767px;top:541px" width="4" height="6"><path d="M0 0 V6 L3 3 Z" fill="#000"/></svg>
<div class="a" style="left:0;top:555px;width:1024px;height:1px;background:linear-gradient(90deg,#a08cb0,#c0b0c8 30%,#9a88a8 60%,#8878a0)"></div>
<div class="a" style="left:779px;top:55px;width:1px;height:500px;background:#202020"></div>
<div class="a" style="left:779px;top:55px;width:245px;height:1px;background:#101010"></div>
<div class="a" style="left:780px;top:56px;width:244px;height:42px;background:#ff0000"></div>
<svg class="a" style="left:785px;top:63.7px;overflow:visible" width="54" height="15.8"><text x="1" y="11.3" font-size="11.3" font-family="Liberation Sans" font-weight="bold" fill="#000" textLength="52" lengthAdjust="spacingAndGlyphs">Jun 05 14</text></svg>
<svg class="a" style="left:876.5px;top:63.7px;overflow:visible" width="64.5" height="15.8"><text x="1" y="11.3" font-size="11.3" font-family="Liberation Sans" font-weight="bold" fill="#000" textLength="62.5" lengthAdjust="spacingAndGlyphs">15:46:55.00</text></svg>
<svg class="a" style="left:785px;top:79.2px;overflow:visible" width="35" height="15.8"><text x="1" y="11.3" font-size="11.3" font-family="Liberation Sans" font-weight="bold" fill="#000" textLength="33" lengthAdjust="spacingAndGlyphs">Obs #:</text></svg>
<svg class="a" style="left:865px;top:79.2px;overflow:visible" width="19.5" height="15.8"><text x="1" y="11.3" font-size="11.3" font-family="Liberation Sans" font-weight="bold" fill="#000" textLength="17.5" lengthAdjust="spacingAndGlyphs">162</text></svg>
<svg class="a" style="left:784.8px;top:100.10000000000001px;overflow:visible" width="78" height="14.8"><text x="1" y="10.6" font-size="10.6" font-family="Liberation Sans" font-weight="bold" fill="#000" textLength="76" lengthAdjust="spacingAndGlyphs">Recording File:</text></svg>
<svg class="a" style="left:787px;top:114.8px;overflow:visible" width="22" height="16.5"><text x="1" y="11.8" font-size="11.8" font-family="Liberation Sans" font-weight="normal" fill="#0000ff" stroke="#0000ff" stroke-width="0.3" textLength="20" lengthAdjust="spacingAndGlyphs">test</text></svg>
<div class="a" style="left:785px;top:130px;width:233px;height:425px;background:#000"></div>
<svg class="a" style="left:960.3px;top:130.4px;overflow:visible" width="27.6" height="13.4"><text x="1" y="9.6" font-size="9.6" font-family="Liberation Sans" font-weight="normal" fill="#fff" textLength="25.6" lengthAdjust="spacingAndGlyphs">Value</text></svg>
<svg class="a" style="left:973.5px;top:145.4px;overflow:visible" width="14.5" height="13.4"><text x="1" y="9.6" font-size="9.6" font-family="Liberation Sans" font-weight="normal" fill="#fff" textLength="12.5" lengthAdjust="spacingAndGlyphs">0.0</text></svg>
<svg class="a" style="left:970px;top:159.6px;overflow:visible" width="18" height="13.4"><text x="1" y="9.6" font-size="9.6" font-family="Liberation Sans" font-weight="normal" fill="#fff" textLength="16" lengthAdjust="spacingAndGlyphs">-0.1</text></svg>
<svg class="a" style="left:861px;top:145.4px;overflow:visible" width="30" height="13.4"><text x="1" y="9.6" font-size="9.6" font-family="Liberation Sans" font-weight="normal" fill="#3a80d8" textLength="28" lengthAdjust="spacingAndGlyphs">P1(Pa)</text></svg>
<svg class="a" style="left:861px;top:159.6px;overflow:visible" width="30" height="13.4"><text x="1" y="9.6" font-size="9.6" font-family="Liberation Sans" font-weight="normal" fill="#ff8a1c" textLength="28" lengthAdjust="spacingAndGlyphs">P2(Pa)</text></svg>
<div class="a" style="left:787px;top:148px;width:6px;height:7px;background:#fff"></div>
<svg class="a" style="left:787px;top:148px" width="6" height="7"><path d="M1 3 L2.5 5 L5 1" stroke="#000" stroke-width="1" fill="none"/></svg>
<div class="a" style="left:787px;top:162px;width:6px;height:7px;background:#fff"></div>
<svg class="a" style="left:787px;top:162px" width="6" height="7"><path d="M1 3 L2.5 5 L5 1" stroke="#000" stroke-width="1" fill="none"/></svg>
</body></html>
